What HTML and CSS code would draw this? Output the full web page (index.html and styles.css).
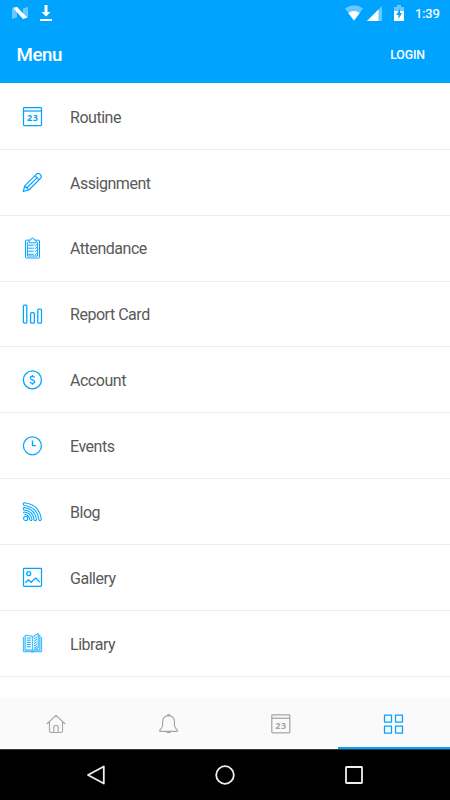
FILE: index.html
```html
<!DOCTYPE html>
<html lang="en">
<head>
<meta charset="utf-8">
<meta name="viewport" content="width=device-width, initial-scale=1">
<title>Menu</title>
<link rel="stylesheet" href="styles.css">
</head>
<body>
<div class="screen">
  <div class="status">
    <svg class="nougat" viewBox="0 0 16 12"><path class="faint" d="M0 1.5 5 0V10.5L0 12ZM11 1.5 16 0V10.5L11 12Z"/><path class="solid" d="M1 .8 5 0 15.3 10.5 11 12Z"/></svg>
    <svg class="download" viewBox="0 0 12 16"><path class="solid" d="M4.5 0h3v7h3L6 11.5 1.5 7h3ZM0 14h12v2H0Z"/></svg>
    <span class="spacer"></span>
    <svg class="wifi" viewBox="0 0 18 16"><path class="faint" d="M0 3.5Q9-3 18 3.5L9 15.5Z"/><path class="solid" d="M3.3 8Q9 4 14.7 8L9 15.5Z"/></svg>
    <svg class="signal" viewBox="0 0 15 15"><path class="faint" d="M15 0V15H0Z"/><path class="solid" d="M11.5 3.5V15H0Z"/></svg>
    <svg class="battery" viewBox="0 0 10 16"><path class="faint" d="M0 2h3V0h4v2h3v5H0Z"/><path class="solid" d="M0 6h10v10H0Z"/><path class="bolt" d="M6 3.5 2.3 10h2.2v4L8 8H6Z"/></svg>
    <span class="time">1:39</span>
  </div>
  <header class="header"><h1>Menu</h1><span class="login">LOGIN</span></header>
  <main class="list">
    <div class="row"><svg class="icon" viewBox="0 0 20 20"><rect x="1.5" y="1.5" width="18" height="18" rx=".8"/><path d="M1.5 5h18"/><text x="10.8" y="15">23</text></svg><span>Routine</span></div>
    <div class="row"><svg class="icon pencil" viewBox="0 0 20 20"><path d="M1.3 19.5 2.7 13.9 14.3 2.3Q16 .7 17.7 1.9L19 3.3Q20 4.8 18.5 6.3L6.8 18ZM2.7 13.9 6.8 18M13 3.6l4.2 4.2M4.7 16 15.2 5.6"/></svg><span>Assignment</span></div>
    <div class="row"><svg class="icon thin" viewBox="0 0 20 20"><path d="M7 2.2H4.2Q3.5 2.2 3.5 3V19Q3.5 20 4.5 20H16.5Q17.5 20 17.5 19V3Q17.5 2.2 16.7 2.2H14M7 4.8V2H8.8Q9 0 10.5 0T12.2 2H14V4.8ZM5.4 4V18H15.6V4M6.2 7.2h5.5M6.2 10.2h5.5M6.2 13.2h5.5M6.2 16.2h5.5M12.7 7l.7.7 1.4-1.5M12.7 10l.7.7 1.4-1.5M12.7 13l.7.7 1.4-1.5M12.7 16l.7.7 1.4-1.5"/></svg><span>Attendance</span></div>
    <div class="row"><svg class="icon" viewBox="0 0 20 20"><rect x="1.4" y="1.2" width="3.4" height="18" rx="1"/><rect x="8.6" y="8.7" width="3.8" height="10.5" rx="1"/><rect x="15.8" y="5" width="3.7" height="14.2" rx="1"/></svg><span>Report Card</span></div>
    <div class="row"><svg class="icon" viewBox="0 0 20 20"><circle cx="10.4" cy="9.9" r="9"/><path d="M12.7 7.6Q12.2 6.4 10.4 6.4 8.3 6.4 8.3 8 8.3 9.4 10.4 9.8 12.7 10.2 12.7 11.8 12.7 13.3 10.4 13.3 8.5 13.3 8 12M10.4 5.1v1.3M10.4 13.3v1.4"/></svg><span>Account</span></div>
    <div class="row"><svg class="icon" viewBox="0 0 20 20"><circle cx="10.4" cy="9.8" r="9"/><path class="bold" d="M10.5 4.5V9.6H14"/></svg><span>Events</span></div>
    <div class="row"><svg class="icon rss" viewBox="0 0 20 20"><circle cx="3.7" cy="16.4" r="2.1"/><path d="M2.3 .8Q1.3 .8 1.3 2T2.3 3.4Q15.4 5 16.8 17.6Q17 18.6 18.1 18.6T19.3 17.3Q17.3 2.4 2.3 .8ZM2.2 5.6Q1.3 5.7 1.3 6.7T2.3 8Q11 9.2 12 17.4Q12.2 18.6 13.3 18.6T14.4 17.2Q12.8 6.8 2.2 5.6ZM1.4 11Q1.3 10 2.2 10.1Q8.5 10.8 10 17.3Q10.1 18.5 9.1 18.5T7.8 17.6Q7 12.8 2.3 12.2"/></svg><span>Blog</span></div>
    <div class="row"><svg class="icon" viewBox="0 0 20 20"><rect x="1.5" y="1.3" width="18" height="18" rx=".8"/><circle cx="6.7" cy="6.6" r="2"/><path d="M3.4 15.8 6.4 12.8 9 15.3 13.8 11 17.8 15.1"/></svg><span>Gallery</span></div>
    <div class="row"><svg class="icon thin" viewBox="0 0 20 20"><path class="pages" d="M1.5 4V18.6H9.3L10.5 19.3 11.7 18.6H19.5V4M3.2 2.5V17H8.5Q10.4 17.3 10.5 18.5V4Q9 2.1 3.2 2.5ZM10.5 4 16.2.5V14.4L10.5 18.5M16.5 2.5H17.8V17H12.5"/><path d="M4.8 5H8.8M4.8 7.2H8.8M4.8 9.4H8.8M4.8 11.6H8.8M4.8 13.8H8.8M12 5.8l2.8-1.9M12 8.2l2.8-1.9M12 10.6l2.8-1.9M12 13l2.8-1.9M12 15.4l2.8-1.9"/></svg><span>Library</span></div>
  </main>
  <nav class="tabs">
    <div class="tab"><svg class="icon outline" viewBox="0 0 20 20"><path d="M.8 10 10 1.3 19.2 10M3.5 8V16.8Q3.5 18.5 5.2 18.5H15Q16.5 18.5 16.5 17V8M7.8 18V12.5Q7.8 11.5 8.8 11.5H11.2Q12.2 11.5 12.2 12.5V18"/></svg></div>
    <div class="tab"><svg class="icon outline" viewBox="0 0 20 20"><path d="M.8 17.3V16Q3.2 14 3.6 11.5V7.8Q3.8 2 9.5 1.6 15.3 2 15.5 7.8V11.5Q15.9 14 18.3 16V17.3ZM8.5 1.5Q8.5.5 9.6.5T10.7 1.5M7.3 17.8Q9.6 19.4 11.8 17.8"/></svg></div>
    <div class="tab"><svg class="icon" viewBox="0 0 20 20"><rect x=".8" y=".9" width="18" height="18" rx=".8"/><path d="M.8 4.2h18"/><text x="10.1" y="14.5">23</text></svg></div>
    <div class="tab active"><svg class="icon" viewBox="0 0 20 20"><path d="M.5 1h7v7H.5ZM11.5 1h7v7H11.5ZM.5 12h7v7H.5ZM11.5 12h7v7H11.5Z"/></svg></div>
  </nav>
  <div class="system">
    <svg viewBox="0 0 20 20"><path d="M17.8 1.5V18.5L2 10Z"/></svg>
    <svg viewBox="0 0 20 20"><circle cx="10" cy="10" r="8.8"/></svg>
    <svg viewBox="0 0 20 20"><rect x="2" y="2" width="16" height="16" rx=".5"/></svg>
  </div>
</div>
</body>
</html>
```
FILE: styles.css
```css
* { box-sizing: border-box; }
body { margin: 0; font-family: Roboto, "Liberation Sans", sans-serif; }
svg { display: block; flex: none; overflow: visible; }
.screen { width: 450px; height: 800px; display: flex; flex-direction: column; overflow: hidden; background: #fff; }
.status { height: 26px; flex: none; display: flex; align-items: center; padding: 0 10px 0 12px; background: #00a4ff; color: #fff; }
.spacer { flex: 1; }
.solid { fill: #fff; }
.faint { fill: #fff; opacity: .4; }
.bolt { fill: #00a4ff; }
.nougat { width: 16px; height: 12px; }
.download { width: 12px; height: 16px; margin-left: 12px; }
.wifi { width: 18px; height: 16px; margin-right: 4px; }
.signal { width: 15px; height: 15px; margin-right: 12px; }
.battery { width: 10px; height: 16px; margin-right: 11px; }
.time { width: 25px; font-size: 13px; letter-spacing: -.1px; white-space: nowrap; -webkit-text-stroke: .2px; }
.header { height: 57px; flex: none; display: flex; align-items: center; justify-content: space-between; padding: 0 25px 0 16.5px; background: #00a4ff; color: #fff; }
.header h1 { margin: 0; font-size: 18.7px; font-weight: 500; letter-spacing: -.4px; }
.login { font-size: 12.3px; font-weight: 500; letter-spacing: -.1px; }
.list { height: 615px; flex: none; padding-top: 1px; overflow: hidden; }
.row { height: 65.87px; display: flex; align-items: center; gap: 28px; padding-left: 22px; border-bottom: 1px solid #ececec; color: #595959; font-size: 16px; letter-spacing: -.47px; }
.row span { padding-top: 1.6px; }
.row .icon { color: #00a4ff; }
.icon { width: 20px; height: 20px; fill: none; stroke: currentColor; stroke-width: 1.25; stroke-linejoin: round; }
.thin { stroke-width: 1; }
.pencil { stroke-width: 1.2; }
.rss { stroke-width: 1.05; }
.outline { stroke-width: 1.15; }
.bold { stroke-width: 1.4; }
.pages { stroke-width: 1.3; opacity: .7; }
.icon text { font: 700 9px "Open Sans", Roboto, sans-serif; letter-spacing: .6px; text-anchor: middle; fill: currentColor; stroke: none; }
.tabs { height: 51px; flex: none; display: grid; grid-template-columns: repeat(4, 1fr); background: #fafafa; color: #a5a5a5; }
.tab { display: flex; align-items: center; justify-content: center; padding-top: 2px; border-bottom: 2px solid transparent; }
.active { color: #00a4ff; border-color: #00a4ff; }
.system { flex: 1; display: flex; align-items: center; justify-content: space-between; padding: 0 86px; background: #000; border-top: 1px solid #3c3c3c; }
.system svg { width: 20px; height: 20px; fill: none; stroke: #eee; stroke-width: 1.8; stroke-linejoin: round; }
```
